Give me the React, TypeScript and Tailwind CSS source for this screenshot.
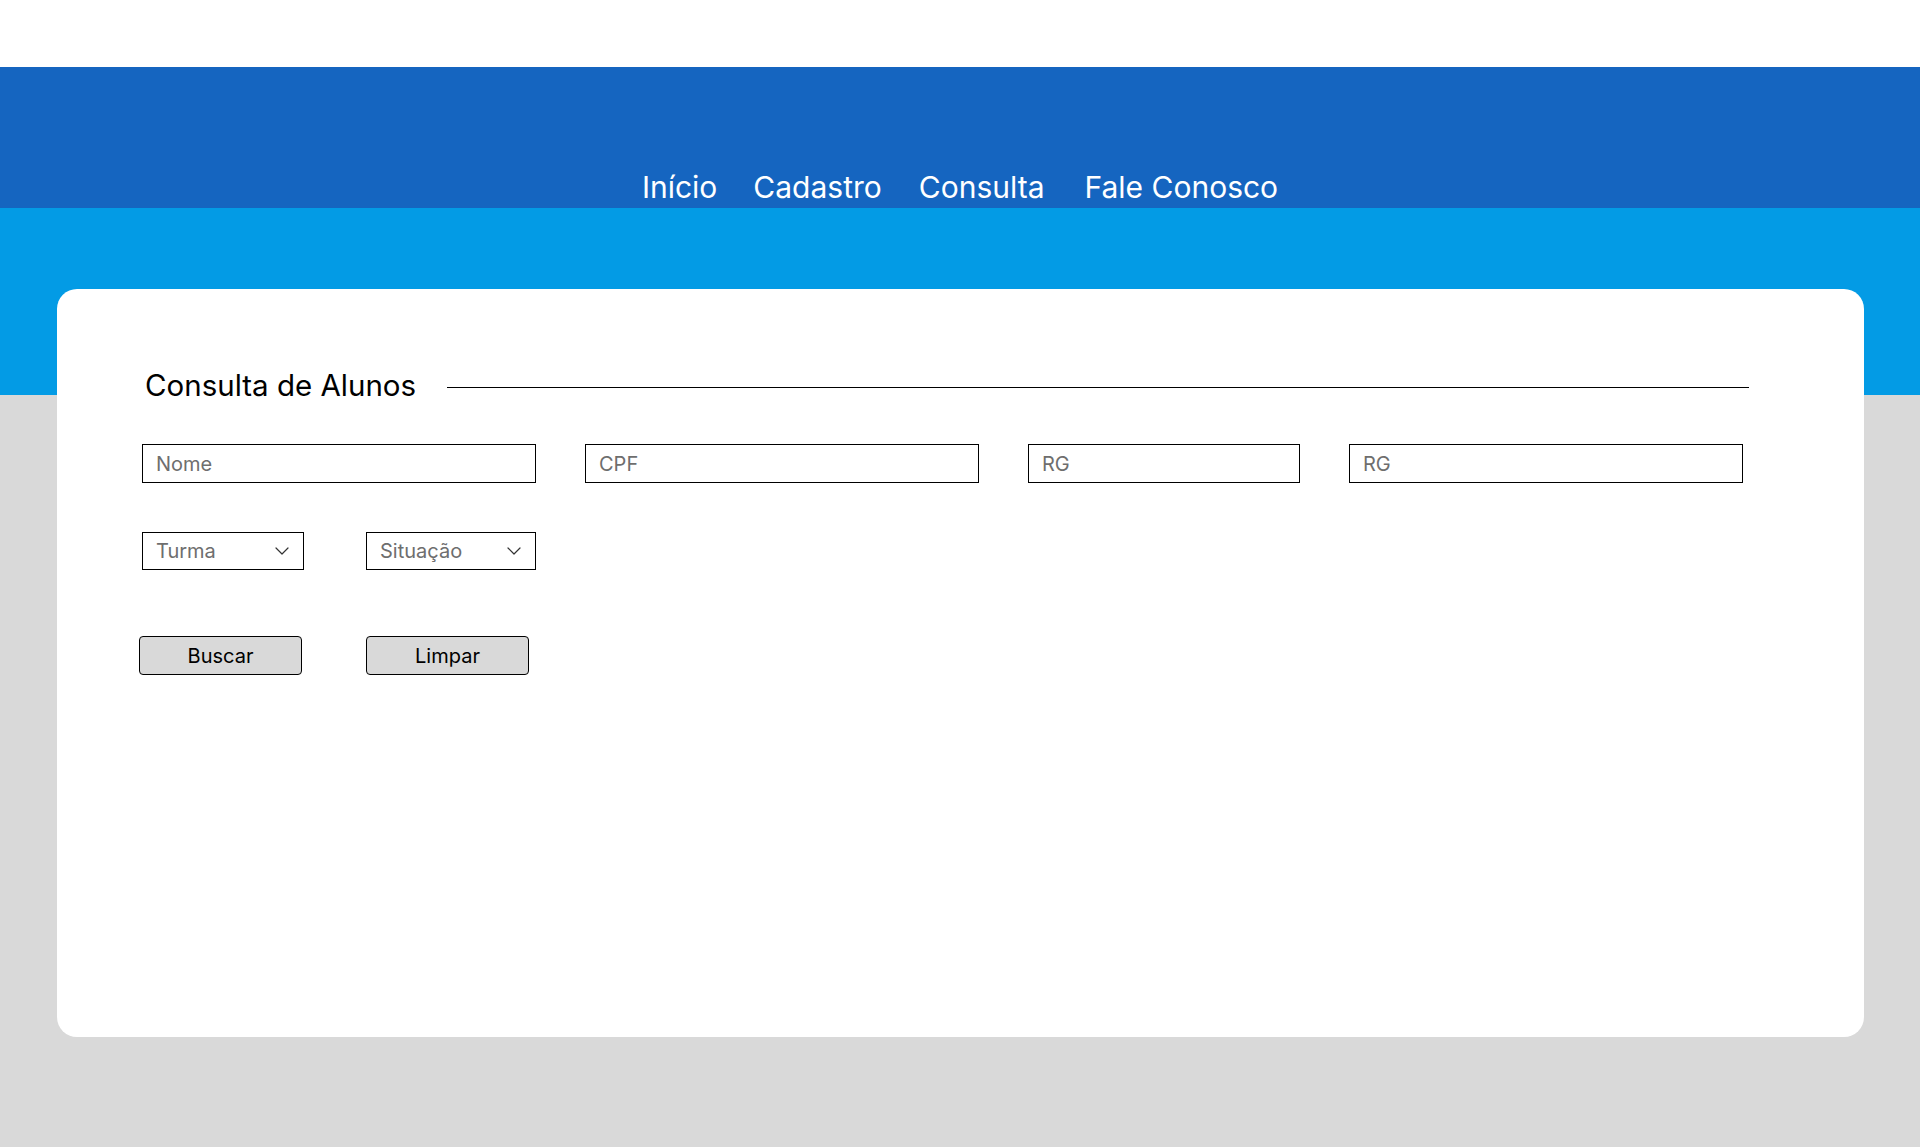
const navItems = [
  { label: 'Início', gap: '' },
  { label: 'Cadastro', gap: 'ml-[36px]' },
  { label: 'Consulta', gap: 'ml-[37px]' },
  { label: 'Fale Conosco', gap: 'ml-[40px]' },
]

function TextInput({ placeholder, width }: { placeholder: string; width: string }) {
  return (
    <input
      type="text"
      placeholder={placeholder}
      className={`${width} h-[39px] border border-black bg-white px-[13px] text-[20px] text-black outline-none placeholder:text-[#6e6e6e]`}
    />
  )
}

function SelectBox({ label, width }: { label: string; width: string }) {
  return (
    <div className={`${width} h-[38px] border border-black bg-white pl-[13px] pr-[14px] flex items-center justify-between`}>
      <span className="text-[20px] text-[#6e6e6e]">{label}</span>
      <svg width="14" height="8" viewBox="0 0 14 8" fill="none" className="shrink-0">
        <path d="M1 1l6 6 6-6" stroke="#333" strokeWidth="1.2" strokeLinecap="round" strokeLinejoin="round" />
      </svg>
    </div>
  )
}

function GrayButton({ label }: { label: string }) {
  return (
    <button
      type="button"
      className="w-[163px] h-[39px] rounded-[4px] border border-black bg-[#d9d9d9] text-[20px] text-black"
    >
      {label}
    </button>
  )
}

export default function App() {
  return (
    <div className="min-h-screen bg-[#d9d9d9] font-['Inter',sans-serif]">
      <div className="h-[67px] bg-white" />

      <header className="h-[141px] bg-[#1565c0] flex items-end justify-center pb-[3px]">
        <nav className="flex">
          {navItems.map((item) => (
            <a key={item.label} href="#" className={`text-[30px] leading-[36px] text-white ${item.gap}`}>
              {item.label}
            </a>
          ))}
        </nav>
      </header>

      <main className="bg-[linear-gradient(to_bottom,#039be5_187px,#d9d9d9_187px)] pt-[81px] pl-[57px] pr-[56px] pb-[110px]">
        <section className="h-[748px] rounded-[20px] bg-white pt-[79px] pl-[85px] pr-[115px]">
          <div className="flex items-center">
            <h1 className="pl-[3px] text-[29.5px] leading-[34px] text-black font-normal whitespace-nowrap">
              Consulta de Alunos
            </h1>
            <div className="ml-[31px] mt-[4px] h-px flex-1 bg-black" />
          </div>

          <div className="mt-[42px] flex gap-[49px]">
            <TextInput placeholder="Nome" width="w-[394px]" />
            <TextInput placeholder="CPF" width="w-[394px]" />
            <TextInput placeholder="RG" width="w-[272px]" />
            <TextInput placeholder="RG" width="w-[394px]" />
          </div>

          <div className="mt-[49px] flex gap-[62px]">
            <SelectBox label="Turma" width="w-[162px]" />
            <SelectBox label="Situação" width="w-[170px]" />
          </div>

          <div className="mt-[66px] flex gap-[64px] -ml-[3px]">
            <GrayButton label="Buscar" />
            <GrayButton label="Limpar" />
          </div>
        </section>
      </main>
    </div>
  )
}
